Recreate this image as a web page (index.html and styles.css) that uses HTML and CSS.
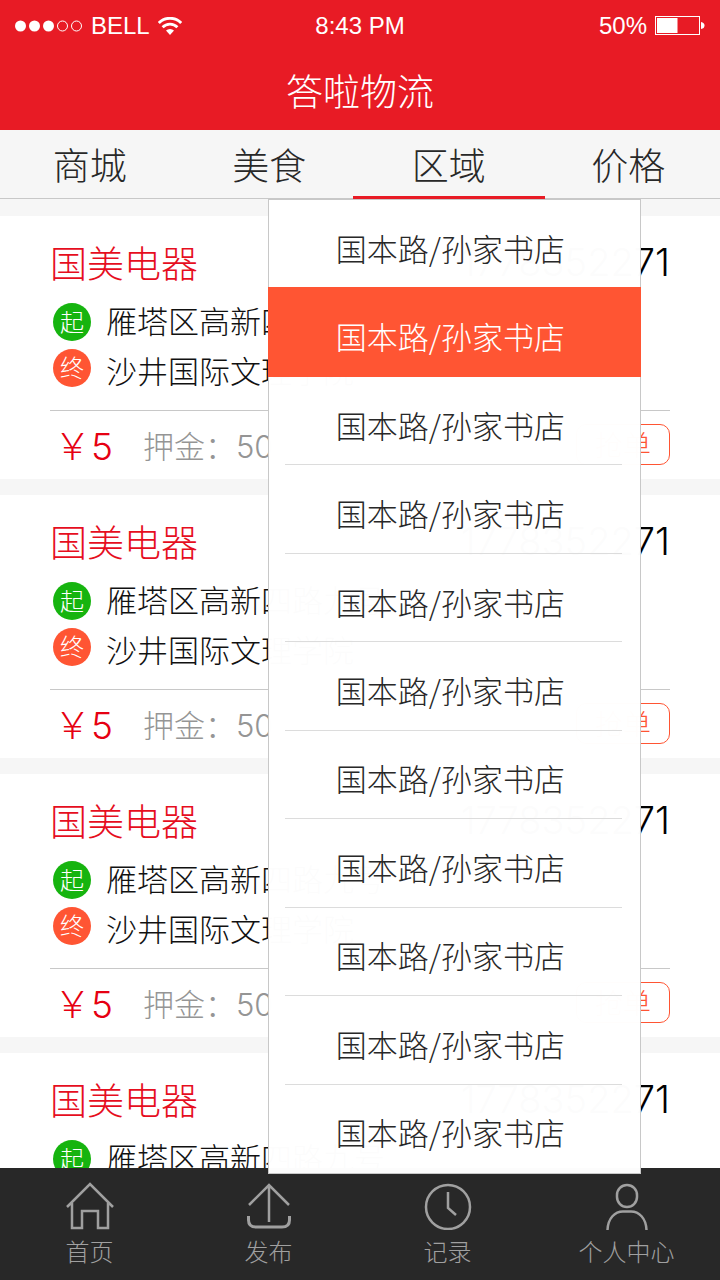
FILE: index.html
```
<!DOCTYPE html>
<html lang="zh-CN">
<head>
    <meta charset="UTF-8">
    <meta name="viewport" content="width=device-width, initial-scale=1">
    <title>答啦物流</title>
    <link rel="stylesheet" href="styles.css">
</head>
<body>
<header class="header">
    <div class="status">
        <div class="status_left">
            <svg class="signal" viewBox="0 0 68 12" width="68" height="12">
                <circle cx="5.500" cy="6" r="5.5" fill="#fff"/>
                <circle cx="19.500" cy="6" r="5.5" fill="#fff"/>
                <circle cx="33.500" cy="6" r="5.5" fill="#fff"/>
                <circle cx="47.500" cy="6" r="5" fill="none" stroke="#fff"/>
                <circle cx="61.500" cy="6" r="5" fill="none" stroke="#fff"/>
            </svg>
            <span>BELL</span>
            <svg class="wifi" viewBox="0 0 24 18" width="24" height="18">
                <path d="M0.800 6 A15.8 15.8 0 0 1 23.200 6" fill="none" stroke="#fff" stroke-width="3"/>
                <path d="M4.600 10.3 A10.4 10.4 0 0 1 19.400 10.3" fill="none" stroke="#fff" stroke-width="2.8"/>
                <path d="M8 13.6 A5.7 5.7 0 0 1 16 13.6 L12 18 Z" fill="#fff"/>
            </svg>
        </div>
        <div class="status_time">8:43 PM</div>
        <div class="status_right">
            <span>50%</span>
            <svg class="battery" viewBox="0 0 50 20" width="50" height="20">
                <rect x="0.5" y="0.5" width="44" height="18" fill="none" stroke="#fff"/>
                <rect x="2" y="2" width="20.5" height="15" fill="#fff"/>
                <path d="M46 6 Q49.5 6.500 49.5 9.500 Q49.5 12.500 46 13 Z" fill="#fff"/>
            </svg>
        </div>
    </div>
    <h1 class="title">答啦物流</h1>
</header>
<nav class="tabs">
    <a href="#">商城</a>
    <a href="#">美食</a>
    <a href="#" class="active">区域</a>
    <a href="#">价格</a>
</nav>
<main class="main">
    <div class="list">
        <article class="card">
            <div class="card_head"><h2>国美电器</h2><span class="phone">1778352271</span></div>
            <div class="route">
                <div class="badges"><span class="badge start">起</span><span class="badge end">终</span></div>
                <div class="address"><p>雁塔区高新四路九号</p><p>沙井国际文理学院</p></div>
            </div>
            <div class="card_foot">
                <span class="price">￥<span class="num">5</span></span>
                <span class="deposit">押金：<span class="num">50</span></span>
                <button type="button" class="grab">抢单</button>
            </div>
        </article>
        <article class="card">
            <div class="card_head"><h2>国美电器</h2><span class="phone">1778352271</span></div>
            <div class="route">
                <div class="badges"><span class="badge start">起</span><span class="badge end">终</span></div>
                <div class="address"><p>雁塔区高新四路九号</p><p>沙井国际文理学院</p></div>
            </div>
            <div class="card_foot">
                <span class="price">￥<span class="num">5</span></span>
                <span class="deposit">押金：<span class="num">50</span></span>
                <button type="button" class="grab">抢单</button>
            </div>
        </article>
        <article class="card">
            <div class="card_head"><h2>国美电器</h2><span class="phone">1778352271</span></div>
            <div class="route">
                <div class="badges"><span class="badge start">起</span><span class="badge end">终</span></div>
                <div class="address"><p>雁塔区高新四路九号</p><p>沙井国际文理学院</p></div>
            </div>
            <div class="card_foot">
                <span class="price">￥<span class="num">5</span></span>
                <span class="deposit">押金：<span class="num">50</span></span>
                <button type="button" class="grab">抢单</button>
            </div>
        </article>
        <article class="card">
            <div class="card_head"><h2>国美电器</h2><span class="phone">1778352271</span></div>
            <div class="route">
                <div class="badges"><span class="badge start">起</span><span class="badge end">终</span></div>
                <div class="address"><p>雁塔区高新四路九号</p><p>沙井国际文理学院</p></div>
            </div>
            <div class="card_foot">
                <span class="price">￥<span class="num">5</span></span>
                <span class="deposit">押金：<span class="num">50</span></span>
                <button type="button" class="grab">抢单</button>
            </div>
        </article>
    </div>
    <!-- 区域下拉 -->
    <ul class="menu">
        <li><button type="button">国本路/孙家书店</button></li>
        <li class="active"><button type="button">国本路/孙家书店</button></li>
        <li><button type="button">国本路/孙家书店</button></li>
        <li><button type="button">国本路/孙家书店</button></li>
        <li><button type="button">国本路/孙家书店</button></li>
        <li><button type="button">国本路/孙家书店</button></li>
        <li><button type="button">国本路/孙家书店</button></li>
        <li><button type="button">国本路/孙家书店</button></li>
        <li><button type="button">国本路/孙家书店</button></li>
        <li><button type="button">国本路/孙家书店</button></li>
        <li><button type="button">国本路/孙家书店</button></li>
    </ul>
</main>
<footer class="footer">
    <a href="#">
        <svg viewBox="0 0 48 48" width="48" height="48">
            <path d="M1 25 L24 2 L47 25 M6 21 V46 H16 V29 H32 V46 H42 V21"/>
        </svg>
        <span>首页</span>
    </a>
    <a href="#">
        <svg viewBox="0 0 48 48" width="48" height="48">
            <path d="M24 3 V40 M4 23 L24 3 L44 23"/>
            <path stroke-width="3" d="M3.500 34 V38 Q3.500 45 11 45 H37 Q44.500 45 44.500 38 V34"/>
        </svg>
        <span>发布</span>
    </a>
    <a href="#">
        <svg viewBox="0 0 48 48" width="48" height="48">
            <circle cx="24" cy="25" r="22"/>
            <path d="M24 10 V26 L32 33"/>
        </svg>
        <span>记录</span>
    </a>
    <a href="#">
        <svg viewBox="0 0 48 48" width="48" height="48">
            <rect x="14" y="3" width="20" height="22" rx="10"/>
            <path d="M4.500 48 C5 36 12 29.500 20 29.500 H28 C36 29.500 43 36 43.500 48"/>
        </svg>
        <span>个人中心</span>
    </a>
</footer>
</body>
</html>
```
FILE: styles.css
```
*{
    margin:0;
    padding:0;
    box-sizing:border-box;
}
body{
    height:100vh;
    display:flex;
    flex-direction:column;
    background:#f6f6f6;
    color:#111;
    font-family:"Noto Sans CJK SC",sans-serif;
    font-weight:300;
}
a{
    color:inherit;
    text-decoration:none;
}
ul{
    list-style:none;
}
button{
    font:inherit;
    color:inherit;
    background:none;
    border:0;
    cursor:pointer;
}
.header{
    background:#e81b25;
    color:#fff;
}
.status{
    display:grid;
    grid-template-columns:1fr auto 1fr;
    align-items:center;
    height:52px;
    padding:0 15px;
    font:24px "Liberation Sans",sans-serif;
}
.status_left,.status_right{
    display:flex;
    align-items:center;
    gap:8px;
}
.status_right{
    justify-content:flex-end;
}
.title{
    height:76px;
    margin-bottom:2px;
    line-height:76px;
    font-size:37px;
    font-weight:300;
    text-align:center;
}
.tabs{
    display:grid;
    grid-template-columns:repeat(4,1fr);
    padding-right:2px;
    border-bottom:1px solid #c8c8c8;
    color:#282828;
    font-size:37px;
    text-align:center;
}
.tabs a{
    position:relative;
    height:68px;
    line-height:68px;
}
.tabs .active::after{
    content:"";
    position:absolute;
    left:-6px;
    right:-6px;
    bottom:-1px;
    height:3px;
    background:#e81b25;
}
.main{
    flex:1;
    min-height:0;
    position:relative;
}
.list{
    height:100%;
    padding-top:17px;
    overflow-y:auto;
    scrollbar-width:none;
}
.card{
    margin-bottom:16px;
    padding:20px 50px 0;
    background:#fff;
}
.card_head{
    display:flex;
    justify-content:space-between;
    align-items:center;
    height:52px;
}
.card_head h2{
    font-size:37px;
    font-weight:300;
    color:#e60e1e;
}
.phone,.num{
    font-family:Inter,sans-serif;
}
.phone{
    color:#000;
    font-size:38px;
}
.route{
    display:flex;
    gap:15px;
    height:122px;
    padding:15px 3px 0;
}
.badges{
    display:grid;
    gap:8px;
    align-content:start;
}
.badge{
    width:38px;
    height:38px;
    border-radius:50%;
    color:#fff;
    font-size:24px;
    line-height:36px;
    text-align:center;
}
.start{
    background:#16b40f;
}
.end{
    background:#ff5533;
}
.address{
    font-size:31px;
    line-height:50px;
    margin-top:-8px;
}
.card_foot{
    display:flex;
    align-items:center;
    height:69px;
    padding:0 0 2px 4px;
    border-top:1px solid #c8c8c8;
}
.price{
    color:#e60012;
    font-size:37px;
}
.deposit{
    margin-left:30px;
    color:#959595;
    font-size:31px;
}
.grab{
    width:94px;
    height:41px;
    margin-left:auto;
    border:1px solid #ff5533;
    border-radius:10px;
    color:#ff5533;
    font-size:28px;
    line-height:36px;
}
.menu{
    position:absolute;
    top:0;
    right:11%;
    bottom:-6px;
    width:373px;
    display:grid;
    grid-auto-rows:1fr;
    background:rgba(255,255,255,.99);
    border:1px solid #c8c8c8;
    color:#282828;
    font-size:31px;
}
.menu li{
    padding:6px 24px 0 16px;
    position:relative;
}
.menu li + li + li:not(:last-child)::after{
    content:"";
    position:absolute;
    left:16px;
    right:18px;
    bottom:0;
    border-bottom:1px solid #dcdcdc;
}
.menu button{
    width:100%;
    height:100%;
}
.menu .active{
    margin:-1px -1px 0;
    background:#ff5533;
    color:#fff;
}
.footer{
    display:grid;
    grid-template-columns:repeat(4,1fr);
    height:112px;
    padding-right:4px;
    background:#282828;
    color:#a0a0a0;
    font-size:24px;
    text-align:center;
}
.footer a{
    display:flex;
    flex-direction:column;
    align-items:center;
    padding-top:14px;
    line-height:42px;
}
.footer svg{
    fill:none;
    stroke:#a0a0a0;
    stroke-width:2.5;
}
```
